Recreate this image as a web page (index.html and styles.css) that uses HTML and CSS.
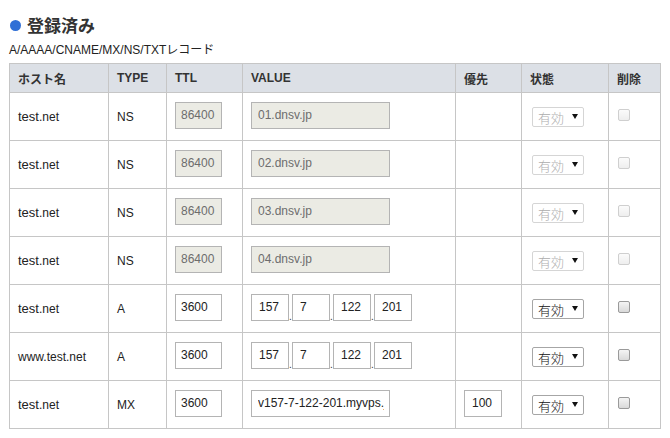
FILE: index.html
```html
<!DOCTYPE html>
<html lang="ja">
<head>
    <meta charset="UTF-8">
    <title>DNSレコード</title>
    <link rel="stylesheet" href="styles.css">
</head>
<body>
<h2 class="title"><span class="dot"></span>登録済み</h2>
<p class="caption">A/AAAA/CNAME/MX/NS/TXTレコード</p>
<table class="records">
    <thead>
        <tr>
            <th class="c-host">ホスト名</th>
            <th class="c-type">TYPE</th>
            <th class="c-ttl">TTL</th>
            <th class="c-value">VALUE</th>
            <th class="c-prio">優先</th>
            <th class="c-state">状態</th>
            <th class="c-del">削除</th>
        </tr>
    </thead>
    <tbody>
        <tr class="locked">
            <td><span class="dom">test</span>.net</td>
            <td>NS</td>
            <td><input class="inp ttl" type="text" value="86400" disabled></td>
            <td><input class="inp val" type="text" value="01.dnsv.jp" disabled></td>
            <td></td>
            <td><span class="sel"><select disabled><option>有効</option></select></span></td>
            <td><input class="chk" type="checkbox" disabled></td>
        </tr>
        <tr class="locked">
            <td><span class="dom">test</span>.net</td>
            <td>NS</td>
            <td><input class="inp ttl" type="text" value="86400" disabled></td>
            <td><input class="inp val" type="text" value="02.dnsv.jp" disabled></td>
            <td></td>
            <td><span class="sel"><select disabled><option>有効</option></select></span></td>
            <td><input class="chk" type="checkbox" disabled></td>
        </tr>
        <tr class="locked">
            <td><span class="dom">test</span>.net</td>
            <td>NS</td>
            <td><input class="inp ttl" type="text" value="86400" disabled></td>
            <td><input class="inp val" type="text" value="03.dnsv.jp" disabled></td>
            <td></td>
            <td><span class="sel"><select disabled><option>有効</option></select></span></td>
            <td><input class="chk" type="checkbox" disabled></td>
        </tr>
        <tr class="locked">
            <td><span class="dom">test</span>.net</td>
            <td>NS</td>
            <td><input class="inp ttl" type="text" value="86400" disabled></td>
            <td><input class="inp val" type="text" value="04.dnsv.jp" disabled></td>
            <td></td>
            <td><span class="sel"><select disabled><option>有効</option></select></span></td>
            <td><input class="chk" type="checkbox" disabled></td>
        </tr>
        <tr>
            <td><span class="dom">test</span>.net</td>
            <td>A</td>
            <td><input class="inp ttl" type="text" value="3600"></td>
            <td>
                <div class="ip">
                    <input class="inp oct" type="text" value="157"><span>.</span><input class="inp oct" type="text" value="7"><span>.</span><input class="inp oct" type="text" value="122"><span>.</span><input class="inp oct" type="text" value="201">
                </div>
            </td>
            <td></td>
            <td><span class="sel"><select><option>有効</option></select></span></td>
            <td><input class="chk" type="checkbox"></td>
        </tr>
        <tr>
            <td class="small">www.test.net</td>
            <td>A</td>
            <td><input class="inp ttl" type="text" value="3600"></td>
            <td>
                <div class="ip">
                    <input class="inp oct" type="text" value="157"><span>.</span><input class="inp oct" type="text" value="7"><span>.</span><input class="inp oct" type="text" value="122"><span>.</span><input class="inp oct" type="text" value="201">
                </div>
            </td>
            <td></td>
            <td><span class="sel"><select><option>有効</option></select></span></td>
            <td><input class="chk" type="checkbox"></td>
        </tr>
        <tr>
            <td><span class="dom">test</span>.net</td>
            <td>MX</td>
            <td><input class="inp ttl" type="text" value="3600"></td>
            <td><input class="inp val" type="text" value="v157-7-122-201.myvps.jp"></td>
            <td><input class="inp prio" type="text" value="100"></td>
            <td><span class="sel"><select><option>有効</option></select></span></td>
            <td><input class="chk" type="checkbox"></td>
        </tr>
    </tbody>
</table>
</body>
</html>
```

FILE: styles.css
```css
body {
    margin: 0;
    padding: 0 9px;
    font-family: "Liberation Sans", Arial, "Noto Sans CJK JP", sans-serif;
    font-size: 12px;
    color: #222;
    background: #fff;
}

.title {
    display: flex;
    align-items: center;
    gap: 6px;
    margin: 0;
    padding-top: 14px;
    height: 22px;
    font-family: "Noto Sans CJK JP", sans-serif;
    font-size: 17px;
    font-weight: bold;
    color: #333;
    line-height: 22px;
}

.dot {
    width: 11px;
    height: 11px;
    margin-left: 1px;
    border-radius: 50%;
    background-color: #2f6fd6;
}

.caption {
    margin: 7px 0 6px;
    font-size: 12px;
    line-height: 14px;
    color: #222;
}

.records {
    width: 652px;
    border-collapse: collapse;
    table-layout: fixed;
}

.records th,
.records td {
    border: 1px solid #c6c6c6;
    padding: 0 0 0 8px;
    text-align: left;
    vertical-align: middle;
}

.records th {
    height: 28px;
    background-color: #dce0e6;
    font-family: "Liberation Sans", Arial, "Noto Sans CJK JP", sans-serif;
    font-weight: bold;
    font-size: 12px;
    color: #333;
}

.records td {
    height: 47px;
    font-size: 12px;
    color: #222;
}

.c-host { width: 90px; }
.c-type { width: 49px; }
.c-ttl { width: 67px; }
.c-value { width: 204px; }
.c-prio { width: 57px; }
.c-state { width: 78px; }
.c-del { width: 43px; }

.dom {
    font-size: 13px;
}

.small {
    font-size: 12px;
}

.inp {
    box-sizing: border-box;
    height: 27px;
    margin: 0 0 2px;
    padding: 0 5px 2px;
    border: 1px solid #b4b4b4;
    background-color: #fff;
    font-family: "Liberation Sans", Arial, sans-serif;
    font-size: 12px;
    color: #222;
    vertical-align: middle;
}

.inp:disabled {
    background-color: #ebebe4;
    color: #6d6d6d;
}

.ttl { width: 47px; }
.val { width: 139px; padding-left: 6px; }
.prio { width: 38px; padding-left: 7px; }
.oct { width: 38px; padding-left: 7px; }

.ip {
    display: flex;
    align-items: flex-end;
    margin-bottom: 2px;
}

.ip .inp {
    margin: 0;
}

.ip span {
    width: 3px;
    font-size: 10px;
    line-height: 8px;
    color: #333;
    text-align: center;
}

.sel {
    position: relative;
    display: inline-block;
    margin-left: 2px;
}

.sel select {
    appearance: none;
    box-sizing: border-box;
    width: 52px;
    height: 20px;
    padding: 0 0 0 5px;
    border: 1px solid #a6a6a6;
    border-radius: 2px;
    background-color: #fff;
    font-family: "Noto Sans CJK JP", sans-serif;
    font-size: 13px;
    font-weight: 300;
    color: #111;
    vertical-align: middle;
}

.sel select:disabled {
    border-color: #c4c4c4;
    color: #8a8a8a;
}

.sel::after {
    content: "";
    position: absolute;
    right: 6px;
    top: 7px;
    border-left: 3px solid transparent;
    border-right: 3px solid transparent;
    border-top: 5px solid #111;
    pointer-events: none;
}

.chk {
    appearance: none;
    box-sizing: border-box;
    width: 12px;
    height: 12px;
    margin: 0 0 4px 1px;
    border: 1px solid #9a9a9a;
    border-radius: 2px;
    background: linear-gradient(#f4f4f4, #d9d9d9);
    vertical-align: middle;
}

.chk:disabled {
    border-color: #cfcfcf;
    background: linear-gradient(#fbfbfb, #eeeeee);
}
```
